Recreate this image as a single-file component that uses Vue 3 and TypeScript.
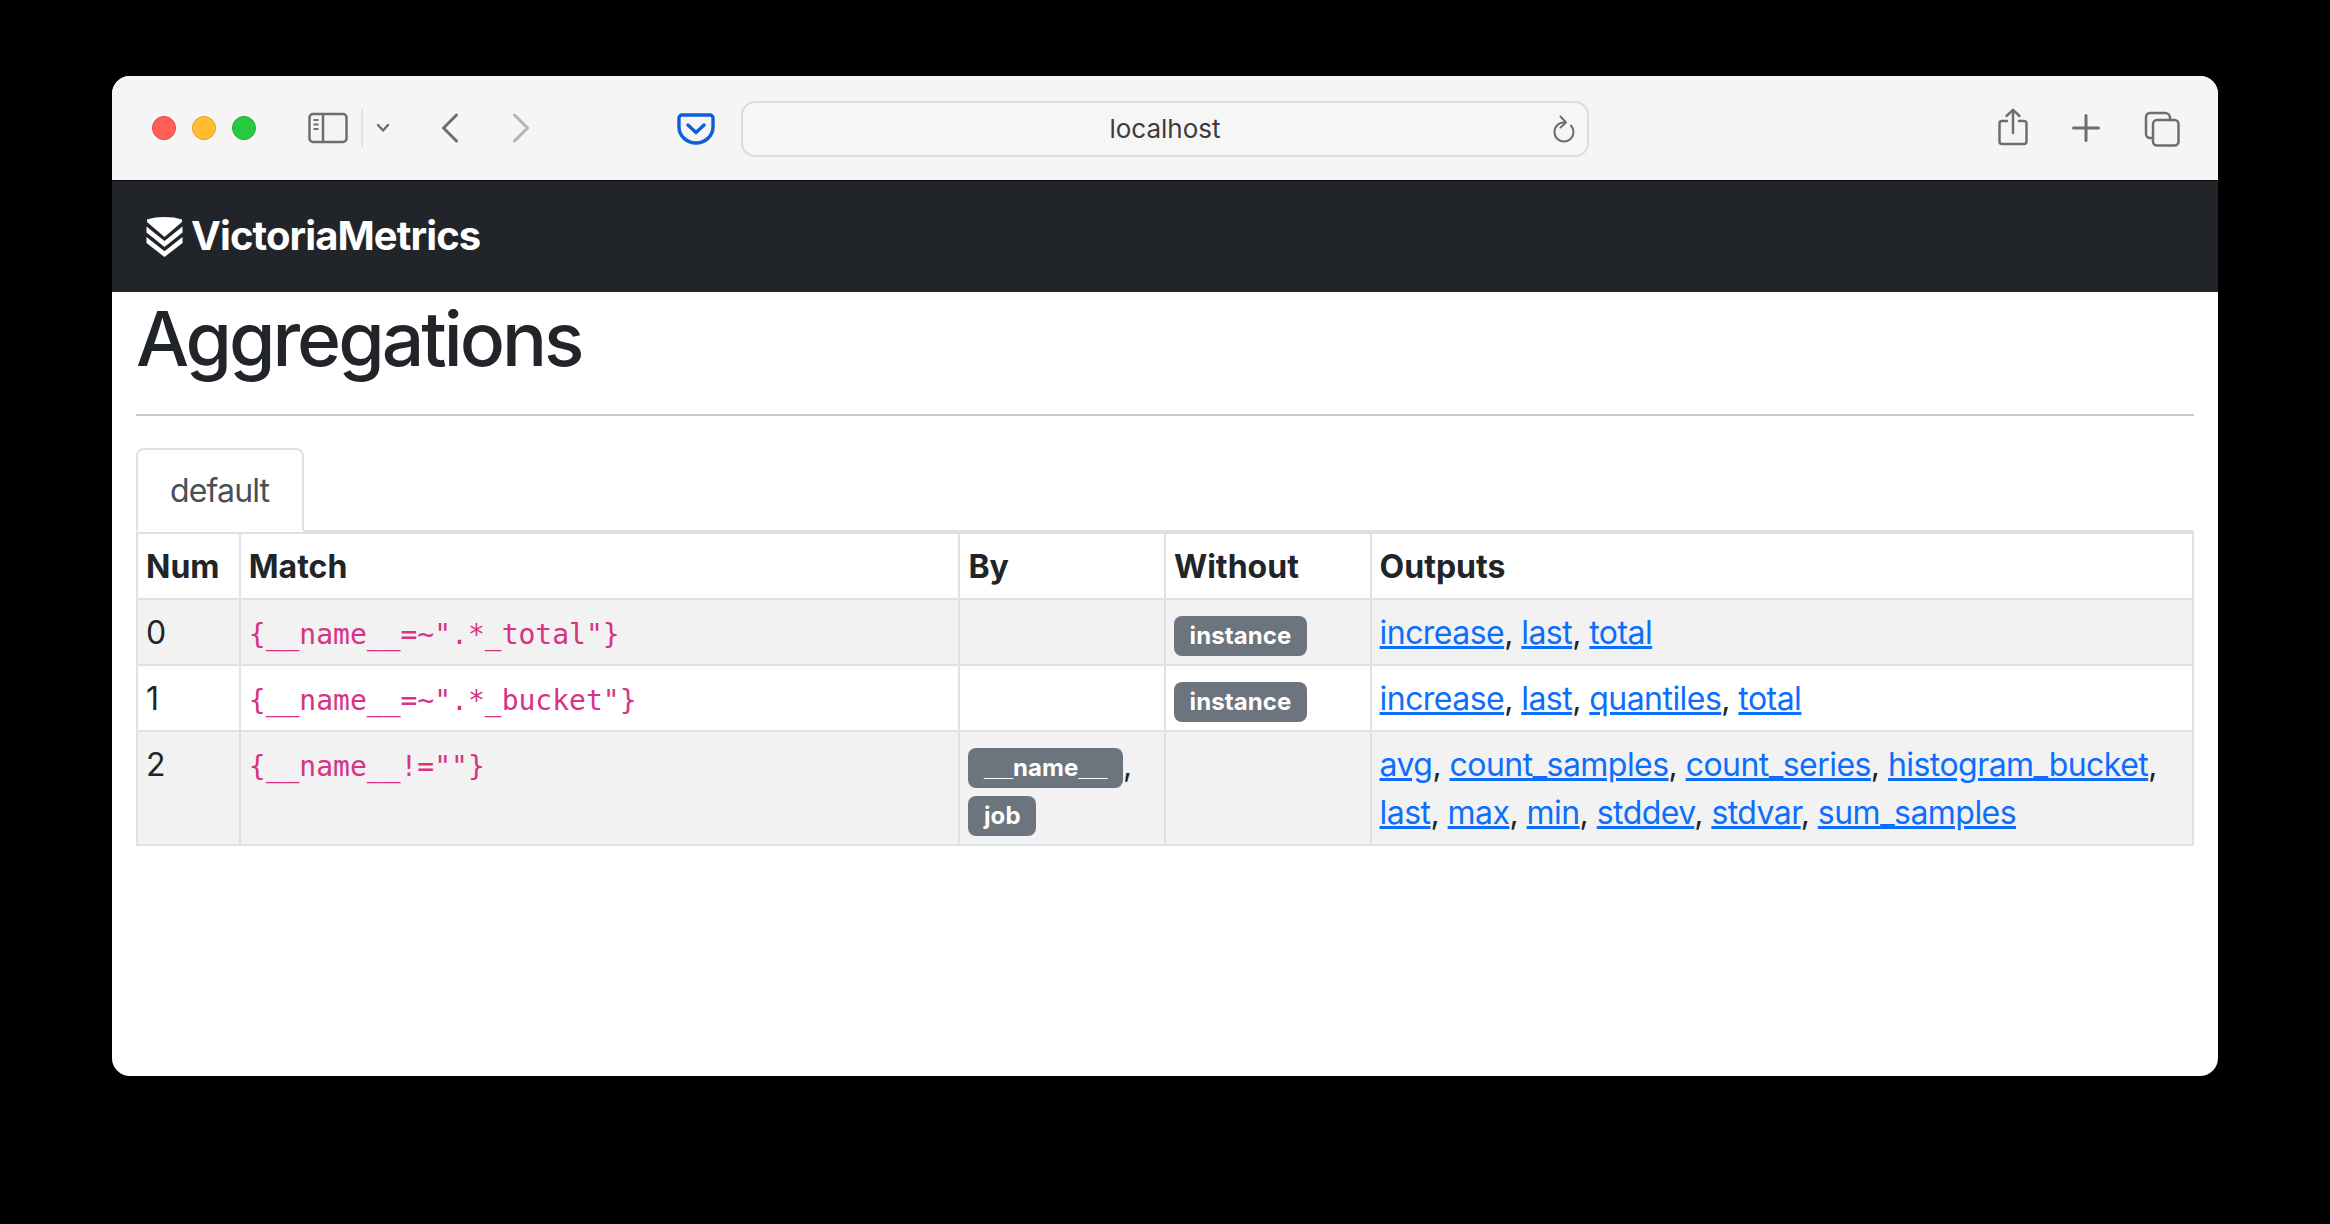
<template>
  <div class="window">
    <!-- browser toolbar -->
    <div class="toolbar">
      <div class="lights">
        <span class="light red"></span>
        <span class="light yellow"></span>
        <span class="light green"></span>
      </div>
      <svg class="ic sidebar-ic" width="40" height="32" viewBox="0 0 40 32" fill="none" stroke="#6e6e6e" stroke-width="2.5">
        <rect x="1.5" y="2" width="37" height="28" rx="3.5" />
        <path d="M15 2v28" />
        <path d="M5.5 8h5M5.5 12.5h5M5.5 17h5" stroke-width="2" />
      </svg>
      <span class="tb-divider"></span>
      <svg class="ic chev-down" width="14" height="10" viewBox="0 0 14 10" fill="none" stroke="#6e6e6e" stroke-width="2.4" stroke-linecap="round" stroke-linejoin="round">
        <path d="M2 2l5 5.5L12 2" />
      </svg>
      <svg class="ic back" width="18" height="30" viewBox="0 0 18 30" fill="none" stroke="#6e6e6e" stroke-width="3" stroke-linecap="round" stroke-linejoin="round">
        <path d="M15.5 2L2.5 15l13 13" />
      </svg>
      <svg class="ic forward" width="18" height="30" viewBox="0 0 18 30" fill="none" stroke="#b4b4b4" stroke-width="3" stroke-linecap="round" stroke-linejoin="round">
        <path d="M2.5 2l13 13-13 13" />
      </svg>
      <svg class="ic pocket" width="38" height="32" viewBox="0 0 38 32" fill="none" stroke="#0d5fd6" stroke-width="3.4" stroke-linecap="round" stroke-linejoin="round">
        <path d="M5 2h28a3 3 0 0 1 3 3v9c0 9-8 16-17 16S2 23 2 14V5a3 3 0 0 1 3-3z" />
        <path d="M11 12l8 7.5L27 12" />
      </svg>
      <div class="address">
        <span class="address-text">localhost</span>
        <svg class="reload" width="24" height="28" viewBox="0 0 24 28" fill="none" stroke="#6e6e6e" stroke-width="2" stroke-linecap="round" stroke-linejoin="round">
          <path d="M12 7.5C6.5 7.5 2.5 11.5 2.5 17s4 9.5 9.5 9.5 9.5-4 9.5-9.5c0-2.5-1-4.8-2.5-6.5" />
          <path d="M8.5 1.5l5.5 6-5.500 5" />
        </svg>
      </div>
      <svg class="ic share" width="30" height="38" viewBox="0 0 30 38" fill="none" stroke="#6e6e6e" stroke-width="2.5" stroke-linecap="round" stroke-linejoin="round">
        <path d="M9 13H4a2.5 2.5 0 0 0-2.5 2.5v18A2.5 2.5 0 0 0 4 36h22a2.5 2.5 0 0 0 2.5-2.5v-18A2.5 2.5 0 0 0 26 13h-5" />
        <path d="M15 25V2M8.5 8L15 1.8 21.5 8" />
      </svg>
      <svg class="ic plus" width="28" height="28" viewBox="0 0 28 28" fill="none" stroke="#6e6e6e" stroke-width="3" stroke-linecap="round">
        <path d="M14 1.5v25M1.5 14h25" />
      </svg>
      <svg class="ic tabs-ic" width="36" height="36" viewBox="0 0 36 36" fill="none" stroke="#6e6e6e" stroke-width="2.5">
        <path d="M8 27H6a4 4 0 0 1-4-4V6a4 4 0 0 1 4-4h15a5 5 0 0 1 5 5v1" />
        <rect x="9" y="9" width="25.5" height="25.5" rx="4" />
      </svg>
    </div>

    <!-- app navbar -->
    <nav class="navbar">
      <svg class="brand-ic" width="37" height="40" viewBox="0 0 37 40" fill="#fff">
        <path d="M1 2.5C11 -0.8 26 -0.8 36 2.5L36 5 18.5 20 1 5z" />
        <path d="M0.5 9.5l18 14.5 18-14.5V15.5L18.5 30 0.5 15.5z" />
        <path d="M0.5 20l18 14.2 18-14.2V26L18.5 40 0.5 26z" />
      </svg>
      <span class="brand">VictoriaMetrics</span>
    </nav>

    <main class="content">
      <h1>Aggregations</h1>
      <hr />
      <div class="tabs">
        <div class="tab">default</div>
      </div>
      <table>
        <colgroup>
          <col style="width: 5%" />
          <col style="width: 35%" />
          <col style="width: 10%" />
          <col style="width: 10%" />
          <col style="width: 40%" />
        </colgroup>
        <thead>
          <tr>
            <th>Num</th>
            <th>Match</th>
            <th>By</th>
            <th>Without</th>
            <th>Outputs</th>
          </tr>
        </thead>
        <tbody>
          <tr v-for="(row, i) in rows" :key="i">
            <td>{{ i }}</td>
            <td><code>{{ row.match }}</code></td>
            <td>
              <template v-for="(b, j) in row.by" :key="b">
                <span v-if="b.startsWith('__')" class="badge"><span class="us">__</span>{{ b.slice(2, -2) }}<span class="us">__</span></span>
                <span v-else class="badge">{{ b }}</span><template v-if="j < row.by.length - 1">, </template>
              </template>
            </td>
            <td>
              <template v-for="(b, j) in row.without" :key="b">
                <span class="badge">{{ b }}</span><template v-if="j < row.without.length - 1">, </template>
              </template>
            </td>
            <td>
              <template v-for="(o, j) in row.outputs" :key="o">
                <a href="#">{{ o }}</a><template v-if="j < row.outputs.length - 1">, </template>
              </template>
            </td>
          </tr>
        </tbody>
      </table>
    </main>
  </div>
</template>

<script setup lang="ts">
interface Row {
  match: string;
  by: string[];
  without: string[];
  outputs: string[];
}

const rows: Row[] = [
  {
    match: '{__name__=~".*_total"}',
    by: [],
    without: ['instance'],
    outputs: ['increase', 'last', 'total'],
  },
  {
    match: '{__name__=~".*_bucket"}',
    by: [],
    without: ['instance'],
    outputs: ['increase', 'last', 'quantiles', 'total'],
  },
  {
    match: '{__name__!=""}',
    by: ['__name__', 'job'],
    without: [],
    outputs: [
      'avg',
      'count_samples',
      'count_series',
      'histogram_bucket',
      'last',
      'max',
      'min',
      'stddev',
      'stdvar',
      'sum_samples',
    ],
  },
];
</script>

<style>
html,
body {
  margin: 0;
  background: #000;
}
body {
  height: 1224px;
  overflow: hidden;
}
</style>

<style scoped>
.window {
  width: 2106px;
  height: 1000px;
  margin: 76px 0 0 112px;
  background: #fff;
  border-radius: 18px;
  overflow: hidden;
  font-family: Inter, "Liberation Sans", sans-serif;
  color: #212529;
}

.toolbar {
  height: 104px;
  background: #f5f5f5;
  display: flex;
  align-items: center;
  padding-left: 40px;
  box-sizing: border-box;
}
.lights {
  display: flex;
  gap: 16px;
}
.light {
  width: 24px;
  height: 24px;
  border-radius: 50%;
  box-sizing: border-box;
}
.red {
  background: #ff5f57;
  border: 1px solid #e0443e;
}
.yellow {
  background: #febc2e;
  border: 1px solid #dea123;
}
.green {
  background: #28c840;
  border: 1px solid #1aab29;
}
.ic {
  flex: none;
  display: block;
}
.sidebar-ic {
  margin-left: 52px;
}
.tb-divider {
  width: 2px;
  height: 38px;
  background: #e2e2e2;
  margin-left: 13px;
}
.chev-down {
  margin-left: 13px;
}
.back {
  margin-left: 51px;
}
.forward {
  margin-left: 53px;
}
.pocket {
  margin-left: 147px;
  margin-top: 2px;
}
.address {
  width: 848px;
  height: 56px;
  margin-left: 26px;
  box-sizing: border-box;
  border: 2px solid #dcdcdc;
  border-radius: 14px;
  background: #f6f6f6;
  display: flex;
  align-items: center;
  justify-content: center;
  position: relative;
  margin-top: 1px;
}
.address-text {
  font-size: 26px;
  color: #3c3c3c;
}
.reload {
  position: absolute;
  right: 11px;
  top: 12px;
}
.share {
  margin-left: 409px;
  margin-top: -3px;
}
.plus {
  margin-left: 44px;
  margin-top: 0;
}
.tabs-ic {
  margin-left: 44px;
  margin-top: 1px;
}

.navbar {
  height: 112px;
  box-sizing: border-box;
  background: #212529;
  border-top: 1px solid #0c0c0c;
  display: flex;
  align-items: center;
  padding-left: 34px;
  gap: 8px;
}
.brand {
  color: #fff;
  font-size: 40px;
  font-weight: 700;
  letter-spacing: -0.9px;
  margin-top: -2px;
}

.content {
  padding: 0 24px 0 25px;
}
h1 {
  margin: 0 0 0 -1px;
  padding-top: 2px;
  font-size: 75px;
  font-weight: 500;
  line-height: 90px;
  letter-spacing: -3px;
}
hr {
  margin: 30px 0 0 -1px;
  border: 0;
  border-top: 2px solid #c9c9c9;
}
.tabs {
  margin: 32px 0 0 -1px;
  display: flex;
  border-bottom: 2px solid #dee2e6;
}
.tab {
  font-size: 32px;
  line-height: 48px;
  letter-spacing: -0.85px;
  color: #495057;
  padding: 17px 33px 15px 32px;
  margin-bottom: -2px;
  border: 2px solid #dee2e6;
  border-bottom-color: #fff;
  border-radius: 8px 8px 0 0;
  background: #fff;
}
table {
  width: calc(100% + 1px);
  margin-left: -1px;
  table-layout: fixed;
  border-collapse: collapse;
  font-size: 32px;
  line-height: 48px;
}
th,
td {
  border: 2px solid #dee2e6;
  padding: 9px 8px 7px;
  text-align: left;
  vertical-align: top;
}
th {
  font-weight: 700;
}
td {
  letter-spacing: -0.55px;
}
tbody tr:nth-child(odd) {
  background: #f2f2f2;
}
code {
  font-family: "DejaVu Sans Mono", monospace;
  font-size: 28px;
  line-height: 1;
  letter-spacing: 0;
  color: #d63384;
}
.badge {
  display: inline-block;
  padding: 8.4px 15.6px;
  margin-top: -1px;
  font-size: 24px;
  font-weight: 700;
  line-height: 1;
  letter-spacing: 0.1px;
  color: #fff;
  background: #6c757d;
  border-radius: 8px;
  vertical-align: baseline;
}
.us {
  font-family: "Liberation Sans", sans-serif;
  font-size: 26px;
  line-height: 0;
  letter-spacing: 0;
}
a {
  color: #0d6efd;
  text-decoration: underline;
}
</style>
